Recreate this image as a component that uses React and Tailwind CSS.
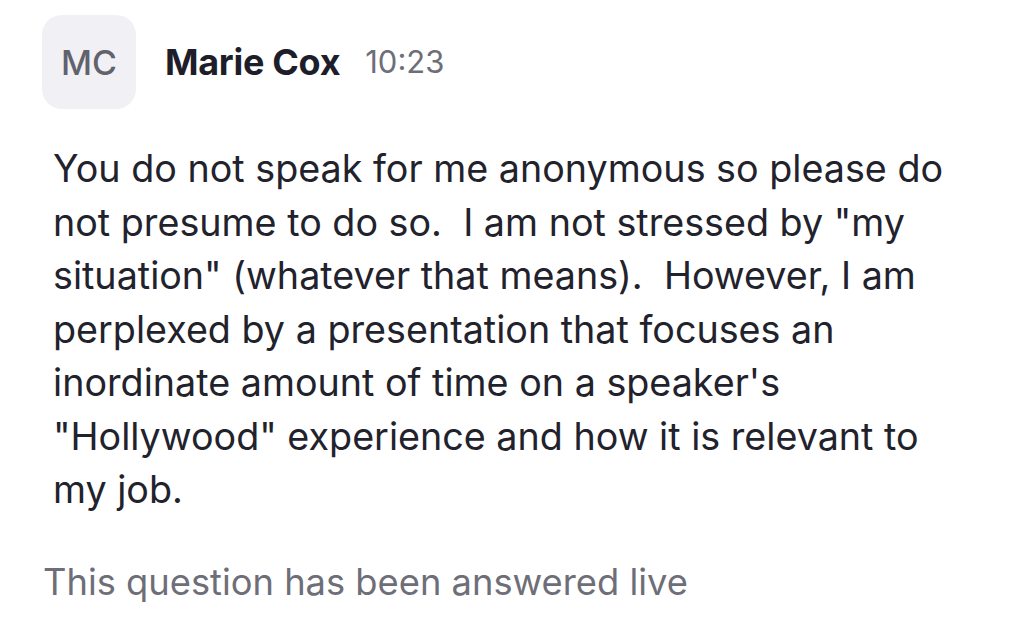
export default function App() {
  const lines = [
    'You do not speak for me anonymous so please do',
    'not presume to do so.  I am not stressed by "my',
    'situation" (whatever that means).  However, I am',
    'perplexed by a presentation that focuses an',
    "inordinate amount of time on a speaker's",
    '"Hollywood" experience and how it is relevant to',
    'my job.',
  ];
  return (
    <div className="w-[1024px] h-[644px] bg-white overflow-hidden" style={{ fontFamily: 'Inter, "Noto Sans", sans-serif' }}>
      <div className="flex items-center pl-[42px] pt-[15px]">
        <div className="w-[94px] h-[94px] rounded-[20px] bg-[#f0f0f5] flex items-center justify-center text-[34px] text-[#62626c] font-medium">MC</div>
        <div className="ml-[29px] text-[36px] font-bold text-[#1e1e2a] tracking-[-0.3px]">Marie Cox</div>
        <div className="ml-[25px] text-[31px] text-[#6e6e78]">10:23</div>
      </div>
      <div className="pl-[53px] pt-[33px] text-[37.7px] leading-[53.5px] text-[#22222c] whitespace-pre">
        {lines.map((l, i) => (
          <div key={i}>{l}</div>
        ))}
      </div>
      <div className="pl-[43px] pt-[45px] text-[36.3px] leading-[40px] text-[#6e6e78]">This question has been answered live</div>
    </div>
  );
}
